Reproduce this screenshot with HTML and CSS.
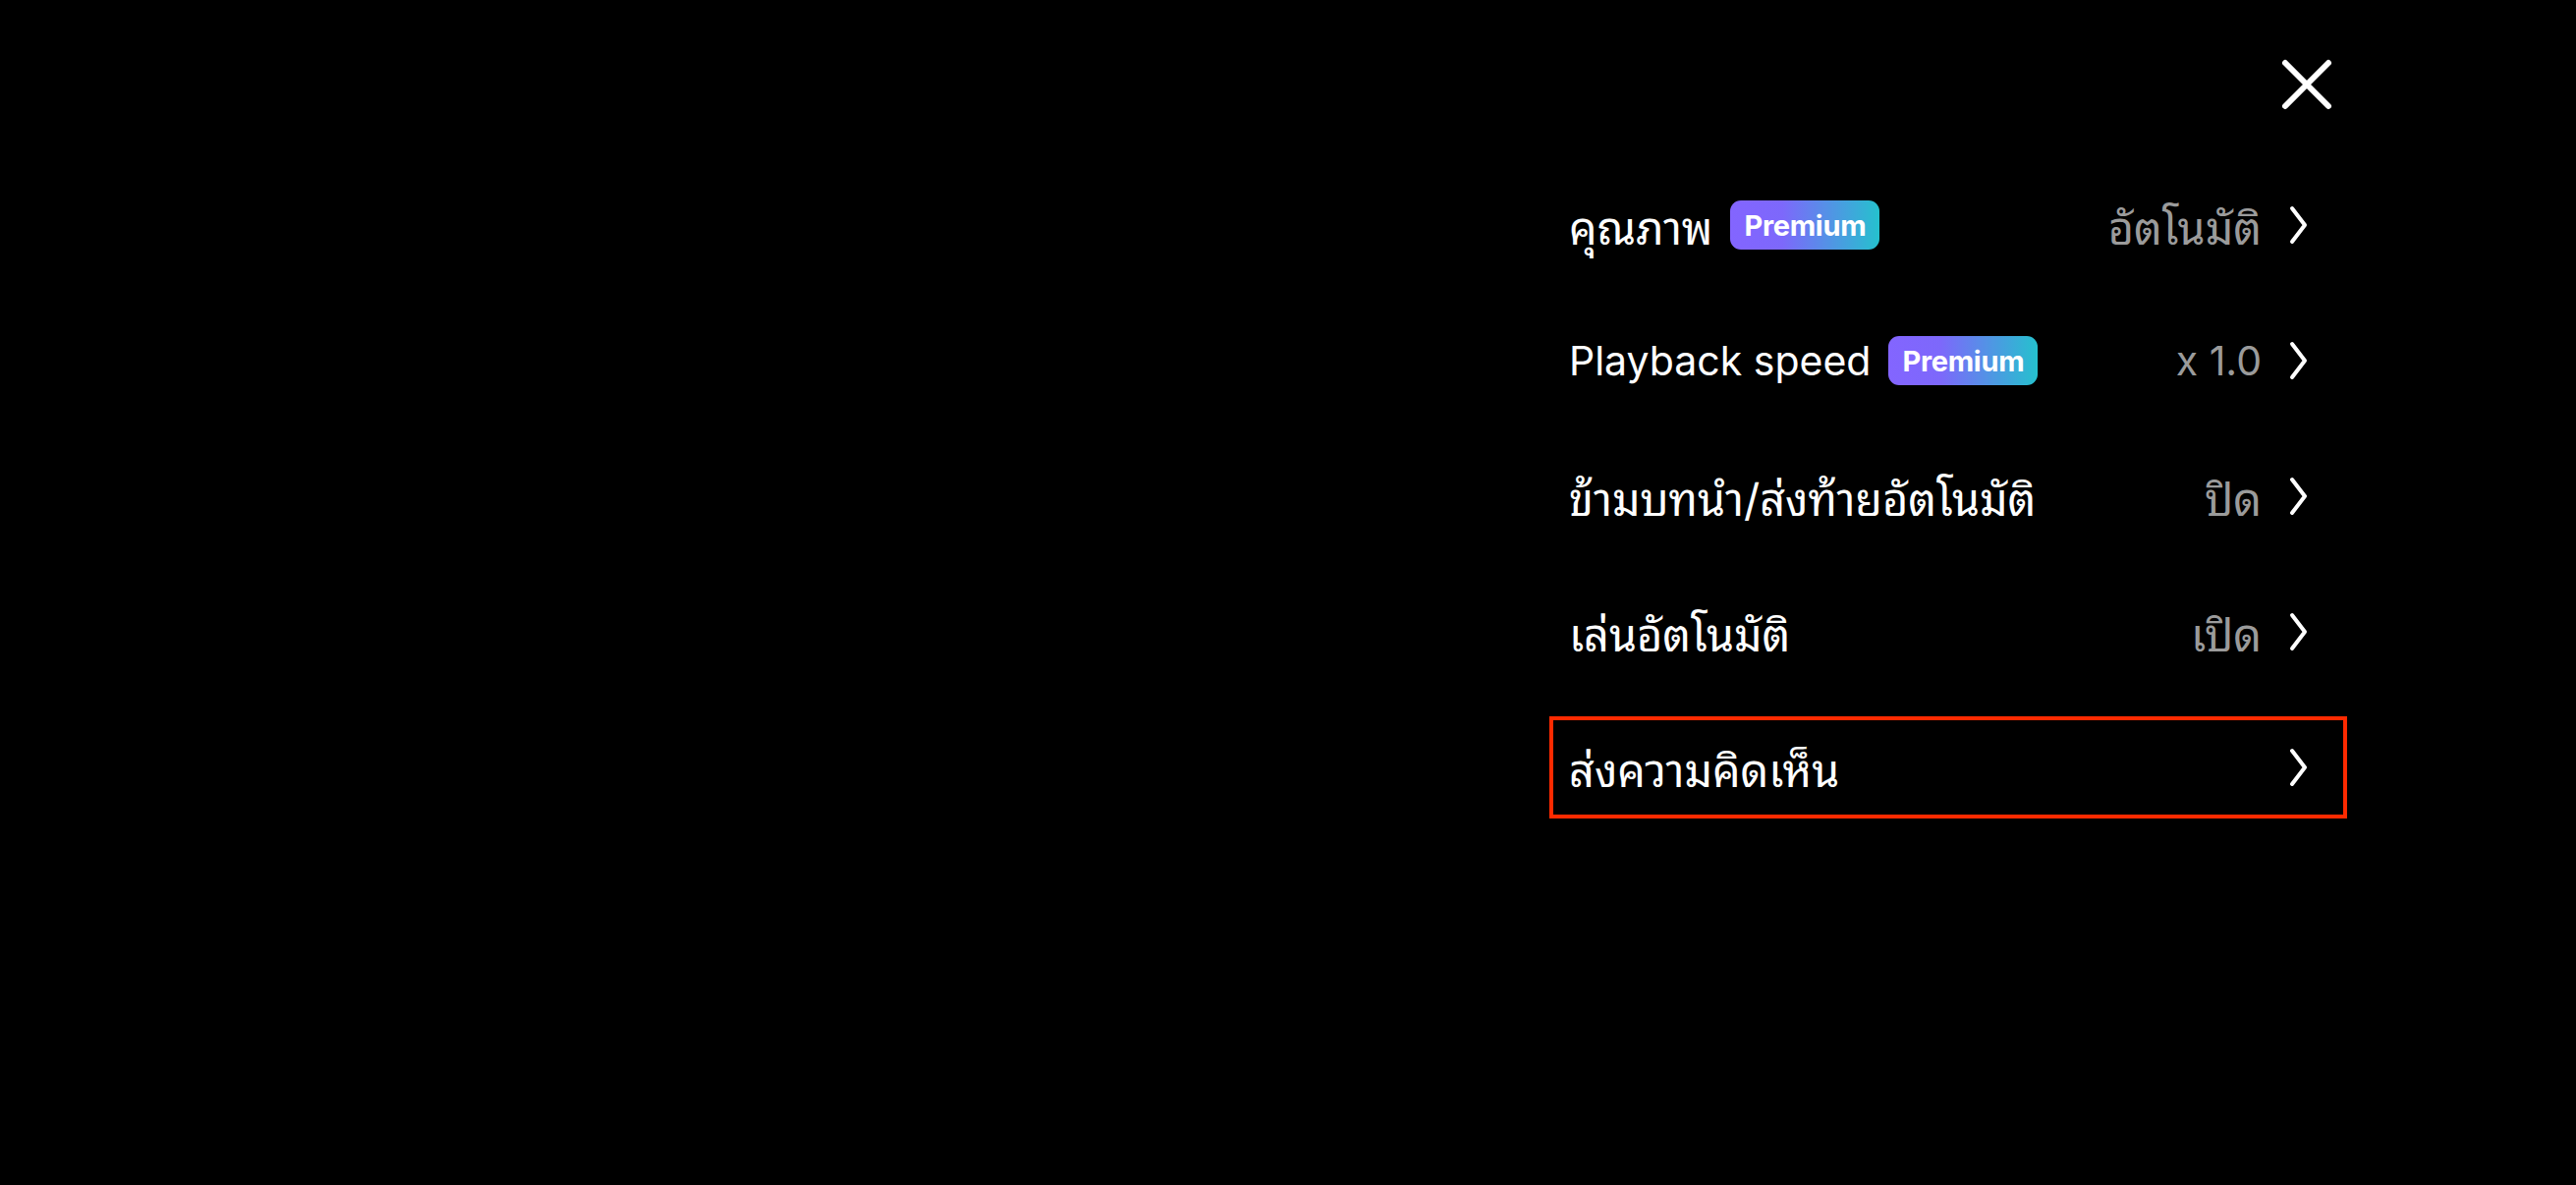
FILE: index.html
```html
<!DOCTYPE html>
<html>
<head>
  <title>Player settings</title>
  <meta name="viewport" content="width=device-width, initial-scale=1">
  <link rel="stylesheet" href="styles.css">
</head>
<body>
  <div class="screen">
    <div class="settings-panel">
      <div class="panel-header">
        <button class="close-btn" aria-label="Close">
          <svg width="64" height="64" viewBox="0 0 64 64">
            <path d="M10 10 L54 54 M54 10 L10 54" stroke="#fff" stroke-width="6" stroke-linecap="round" fill="none"/>
          </svg>
        </button>
      </div>

      <ul class="menu-list">
        <li class="menu-row">
          <span class="row-label" lang="th">คุณภาพ</span>
          <span class="premium-badge">Premium</span>
          <span class="row-value" lang="th">อัตโนมัติ</span>
          <svg class="chevron" width="24" height="40" viewBox="0 0 24 40"><path d="M5 3 L18 20 L5 37"/></svg>
        </li>
        <li class="menu-row">
          <span class="row-label">Playback speed</span>
          <span class="premium-badge">Premium</span>
          <span class="row-value">x 1.0</span>
          <svg class="chevron" width="24" height="40" viewBox="0 0 24 40"><path d="M5 3 L18 20 L5 37"/></svg>
        </li>
        <li class="menu-row">
          <span class="row-label" lang="th">ข้ามบทนำ/ส่งท้ายอัตโนมัติ</span>
          <span class="row-value" lang="th">ปิด</span>
          <svg class="chevron" width="24" height="40" viewBox="0 0 24 40"><path d="M5 3 L18 20 L5 37"/></svg>
        </li>
        <li class="menu-row">
          <span class="row-label" lang="th">เล่นอัตโนมัติ</span>
          <span class="row-value" lang="th">เปิด</span>
          <svg class="chevron" width="24" height="40" viewBox="0 0 24 40"><path d="M5 3 L18 20 L5 37"/></svg>
        </li>
        <li class="menu-row highlighted">
          <span class="row-label" lang="th">ส่งความคิดเห็น</span>
          <span class="row-value"></span>
          <svg class="chevron" width="24" height="40" viewBox="0 0 24 40"><path d="M5 3 L18 20 L5 37"/></svg>
        </li>
      </ul>
    </div>
  </div>
</body>
</html>
```

FILE: styles.css
```css
/* Page */
html, body {
  margin: 0;
  background: #000;
}

body {
  font-family: Inter, "Noto Sans Thai Looped", "Noto Sans Thai", "Noto Sans", "DejaVu Sans", sans-serif;
  color: #fff;
}

.screen {
  width: 2622px;
  height: 1206px;
  display: flex;
  justify-content: flex-end;
  padding-right: 233px;
  box-sizing: border-box;
}

/* Settings panel */
.settings-panel {
  width: 812px;
  padding-top: 54px;
  display: flex;
  flex-direction: column;
}

.panel-header {
  display: flex;
  justify-content: flex-end;
  padding-right: 9px;
}

.close-btn {
  width: 64px;
  height: 64px;
  padding: 0;
  border: none;
  background: none;
  cursor: pointer;
}

.close-btn svg {
  display: block;
}

/* Menu rows */
.menu-list {
  list-style: none;
  margin: 59px 0 0;
  padding: 0;
  display: flex;
  flex-direction: column;
  gap: 34px;
}

.menu-row {
  height: 104px;
  box-sizing: border-box;
  display: flex;
  align-items: center;
  padding: 0 33px 0 16px;
  border: 4px solid transparent;
  font-size: 41px;
  cursor: pointer;
}

.menu-row.highlighted {
  border-color: #ff2a00;
}

/* Thai glyphs in the fallback font run small, so bump them */
[lang="th"] {
  font-size: 45px;
}

.row-label {
  white-space: nowrap;
}

.premium-badge {
  margin-left: 18px;
  height: 50px;
  padding: 0 14px;
  display: flex;
  align-items: center;
  border-radius: 11px;
  background: linear-gradient(90deg, #8365ff 0%, #7d68fb 35%, #25c1ce 100%);
  font-size: 29px;
  font-weight: 700;
  letter-spacing: -0.3px;
}

.row-value {
  margin-left: auto;
  color: #9b9b9b;
  white-space: nowrap;
}

.chevron {
  margin-left: 26px;
  display: block;
}

.chevron path {
  fill: none;
  stroke: #fff;
  stroke-width: 4;
  stroke-linecap: round;
  stroke-linejoin: round;
}
```
